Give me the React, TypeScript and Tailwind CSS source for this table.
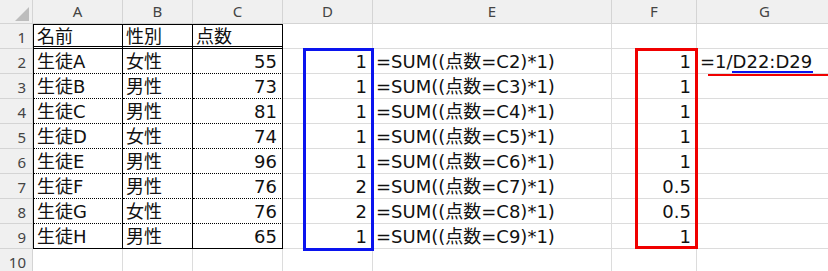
import React from "react";

type Cell = { text?: string; align?: "left" | "right"; cls?: string };

const cols = ["A", "B", "C", "D", "E", "F", "G"];

const students = [
  ["生徒A", "女性", "55", "1", "1"],
  ["生徒B", "男性", "73", "1", "1"],
  ["生徒C", "男性", "81", "1", "1"],
  ["生徒D", "女性", "74", "1", "1"],
  ["生徒E", "男性", "96", "1", "1"],
  ["生徒F", "男性", "76", "2", "0.5"],
  ["生徒G", "女性", "76", "2", "0.5"],
  ["生徒H", "男性", "65", "1", "1"],
];

const font = "font-['DejaVu_Sans','Noto_Sans_CJK_JP',sans-serif]";
const grid = "border-r border-b border-[#dcdcdc]";

function buildRows(): Cell[][] {
  const rows: Cell[][] = [];
  const head = "border-t border-t-black border-r border-r-black border-b-[3px] border-b-black [border-bottom-style:double]";
  rows.push([
    { text: "名前", cls: `border-l border-l-black ${head}` },
    { text: "性別", cls: head },
    { text: "点数", cls: head },
    {},
    {},
    {},
    {},
  ]);
  students.forEach((s, i) => {
    const last = i === students.length - 1;
    const bottom = last
      ? "border-r border-r-black border-b border-b-black"
      : "border-r border-r-black border-b border-b-black [border-bottom-style:dotted]";
    rows.push([
      { text: s[0], cls: `border-l border-l-black ${bottom}` },
      { text: s[1], cls: bottom },
      { text: s[2], align: "right", cls: bottom },
      { text: s[3], align: "right" },
      { text: `=SUM((点数=C${i + 2})*1)` },
      { text: s[4], align: "right" },
      { text: i === 0 ? "=1/D22:D29" : "" },
    ]);
  });
  rows.push([{}, {}, {}, {}, {}, {}, {}]);
  return rows;
}

export default function App() {
  const rows = buildRows();
  return (
    <div className={`relative w-[828px] h-[271px] overflow-hidden bg-white text-[18px] leading-none text-[#111] ${font}`}>
      <div className="grid grid-cols-[33px_90px_70px_90px_90px_239px_85px_136px] grid-rows-[24px_repeat(10,25px)] w-[833px]">
        {/* header row */}
        <div className="relative bg-[#f0f0f0] border-r border-b border-[#d4d4d4]">
          <svg className="absolute left-[14px] top-[7px]" width="16" height="15" viewBox="0 0 16 15">
            <polygon points="15,0 15,14 1,14" fill="#bdbdbd" />
          </svg>
        </div>
        {cols.map((c) => (
          <div
            key={c}
            className="flex items-center justify-center bg-[#f0f0f0] border-r border-b border-[#d4d4d4] text-[15px] text-[#444] font-['Noto_Sans',sans-serif]"
          >
            {c}
          </div>
        ))}

        {rows.map((row, r) => (
          <React.Fragment key={r}>
            <div className="flex items-center justify-end pr-[6px] pt-[2px] bg-[#f0f0f0] border-r border-b border-[#d4d4d4] text-[15px] text-[#444] font-['Noto_Sans',sans-serif]">
              {r + 1}
            </div>
            {row.map((cell, ci) => (
              <div
                key={ci}
                className={`flex items-center whitespace-nowrap pt-[2px] ${cell.cls ?? grid} ${
                  cell.align === "right" ? "justify-end pr-[5px]" : "justify-start pl-[3px]"
                }`}
              >
                {cell.text}
              </div>
            ))}
          </React.Fragment>
        ))}
      </div>

      {/* drawn overlays */}
      <div className="absolute left-[303px] top-[48px] w-[71px] h-[203px] border-[3px] border-[#0a14ee]" />
      <div className="absolute left-[635px] top-[48px] w-[63px] h-[201px] border-[3px] border-[#f00000]" />
      <div className="absolute left-[732px] top-[71px] w-[81px] h-[2px] bg-[#0a14ee]" />
      <div className="absolute left-[708px] top-[74px] w-[120px] h-[2px] bg-[#f00000]" />
    </div>
  );
}
